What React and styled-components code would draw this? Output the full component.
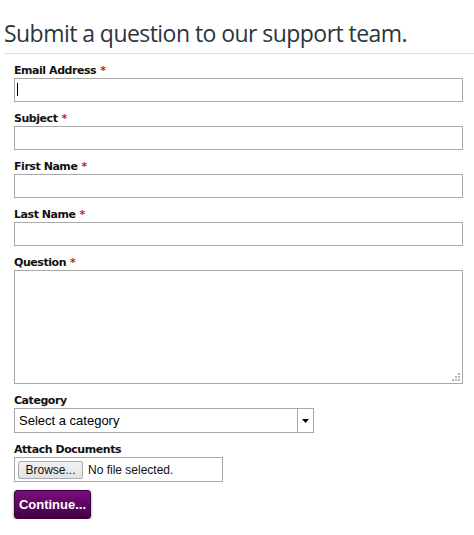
import React from "react";
import styled, { createGlobalStyle } from "styled-components";

const Global = createGlobalStyle`
  html, body { margin: 0; padding: 0; background: #fff; }
  body { font-family: "DejaVu Sans", Verdana, sans-serif; }
  * { box-sizing: border-box; }
`;

const Page = styled.div`
  padding: 0 0 0 4px;
  width: 474px;
`;

const Heading = styled.h1`
  margin: 0;
  padding: 20px 0 7px 0;
  font-family: "Open Sans", "DejaVu Sans", sans-serif;
  font-weight: 400;
  font-size: 23px;
  line-height: 26px;
  color: #2b3640;
  border-bottom: 1px solid #dedede;
  letter-spacing: -0.55px;
`;

const Form = styled.form`
  display: flex;
  flex-direction: column;
  padding: 9px 11px 0 10px;
`;

const Field = styled.div`
  display: flex;
  flex-direction: column;
  margin-bottom: ${(p) => (p.$last ? "8px" : "9px")};
`;

const Label = styled.label`
  font-family: "DejaVu Sans", sans-serif;
  font-weight: 700;
  font-size: 11px;
  line-height: 15px;
  color: #111;
  letter-spacing: -0.45px;
`;

const Req = styled.span`
  color: #cc1a1a;
  margin-left: 4px;
`;

const InputWrap = styled.div`
  position: relative;
`;

const TextInput = styled.input`
  display: block;
  width: 100%;
  height: 24px;
  margin: 0;
  border: 1px solid #a9a9a9;
  padding: 0 4px;
  font-family: "Liberation Sans", Arial, sans-serif;
  font-size: 13px;
  outline: none;
  background: #fff;
`;

const Caret = styled.span`
  position: absolute;
  left: 3px;
  top: 5px;
  width: 1px;
  height: 13px;
  background: #000;
`;

const TextArea = styled.textarea`
  display: block;
  width: 100%;
  height: 114px;
  margin: 0;
  border: 1px solid #a9a9a9;
  resize: none;
  outline: none;
  padding: 4px;
  font-family: "Liberation Sans", Arial, sans-serif;
  font-size: 13px;
`;

const Grip = styled.svg`
  position: absolute;
  right: 3px;
  bottom: 3px;
  display: block;
`;

const SelectBox = styled.div`
  display: flex;
  width: 300px;
  height: 25px;
  border: 1px solid #a9a9a9;
  background: #fff;
`;

const SelectText = styled.div`
  flex: 1;
  display: flex;
  align-items: center;
  padding-left: 4px;
  font-family: "Liberation Sans", Arial, sans-serif;
  font-size: 13px;
  color: #000;
`;

const ArrowBox = styled.div`
  width: 16px;
  border-left: 1px solid #a9a9a9;
  display: flex;
  align-items: center;
  justify-content: center;
`;

const FileBox = styled.div`
  display: flex;
  align-items: center;
  width: 209px;
  height: 25px;
  border: 1px solid #a9a9a9;
  padding: 0 3px;
  gap: 5px;
`;

const BrowseButton = styled.button`
  height: 18px;
  width: 65px;
  padding: 0;
  border: 1px solid #acacac;
  border-radius: 2px;
  background: linear-gradient(#f2f2f2, #e2e2e2);
  font-family: "Liberation Sans", Arial, sans-serif;
  font-size: 12px;
  color: #111;
`;

const FileText = styled.span`
  font-family: "Liberation Sans", Arial, sans-serif;
  font-size: 12px;
  color: #111;
`;

const Actions = styled.div`
  display: flex;
`;

const Continue = styled.button`
  width: 77px;
  height: 29px;
  border: 1px solid #3a0340;
  border-radius: 3px;
  background: linear-gradient(#7a0d7e, #400045);
  box-shadow: 0 1px 3px rgba(0, 0, 0, 0.45);
  color: #fff;
  font-family: "Liberation Sans", Arial, sans-serif;
  font-weight: 700;
  font-size: 13px;
  padding: 0;
`;

const fields = ["Subject", "First Name", "Last Name"];

export default function App() {
  return (
    <>
      <Global />
      <Page>
        <Heading>Submit a question to our support team.</Heading>
        <Form onSubmit={(e) => e.preventDefault()}>
          <Field>
            <Label>
              Email Address<Req>*</Req>
            </Label>
            <InputWrap>
              <TextInput type="text" />
              <Caret />
            </InputWrap>
          </Field>
          {fields.map((f) => (
            <Field key={f}>
              <Label>
                {f}
                <Req>*</Req>
              </Label>
              <TextInput type="text" />
            </Field>
          ))}
          <Field>
            <Label>
              Question<Req>*</Req>
            </Label>
            <InputWrap>
              <TextArea />
              <Grip width="8" height="8" viewBox="0 0 8 8">
                <g fill="#b5b5b5">
                  <rect x="6" y="0" width="2" height="2" />
                  <rect x="3" y="3" width="2" height="2" />
                  <rect x="6" y="3" width="2" height="2" />
                  <rect x="0" y="6" width="2" height="2" />
                  <rect x="3" y="6" width="2" height="2" />
                  <rect x="6" y="6" width="2" height="2" />
                </g>
              </Grip>
            </InputWrap>
          </Field>
          <Field>
            <Label>Category</Label>
            <SelectBox>
              <SelectText>Select a category</SelectText>
              <ArrowBox>
                <svg width="7" height="4" viewBox="0 0 7 4">
                  <path d="M0 0h7L3.5 4z" fill="#000" />
                </svg>
              </ArrowBox>
            </SelectBox>
          </Field>
          <Field $last>
            <Label>Attach Documents</Label>
            <FileBox>
              <BrowseButton type="button">Browse...</BrowseButton>
              <FileText>No file selected.</FileText>
            </FileBox>
          </Field>
          <Actions>
            <Continue type="submit">Continue...</Continue>
          </Actions>
        </Form>
      </Page>
    </>
  );
}
